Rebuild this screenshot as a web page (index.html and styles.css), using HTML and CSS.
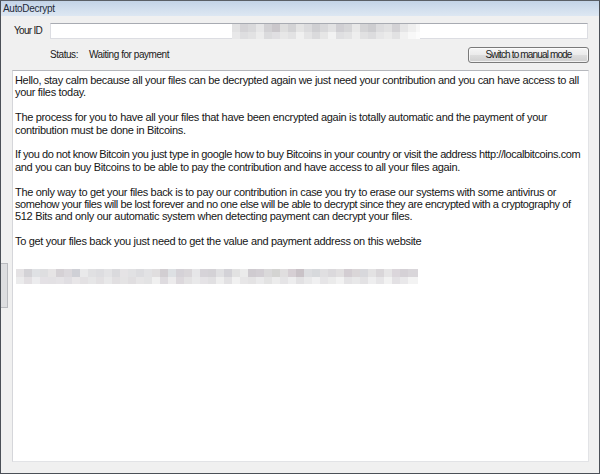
FILE: index.html
```html
<!DOCTYPE html>
<html>
<head>
<meta charset="utf-8">
<title>AutoDecrypt</title>
<link rel="stylesheet" href="styles.css">
</head>
<body>
<div class="window">
  <div class="titlebar">AutoDecrypt</div>
  <div class="row row-id">
    <span class="label id-label">Your ID</span>
    <div class="idbox">
      <svg class="blur blur-id" width="188" height="15" viewBox="0 0 188 15">
        <g>
          <rect x="0" y="0" width="8" height="8" fill="#e2e2e3"/>
          <rect x="8" y="0" width="8" height="8" fill="#d4d3d6"/>
          <rect x="16" y="0" width="8" height="8" fill="#d9d9db"/>
          <rect x="24" y="0" width="8" height="8" fill="#e6e6e7"/>
          <rect x="32" y="0" width="8" height="8" fill="#d2d1d4"/>
          <rect x="40" y="0" width="8" height="8" fill="#cac7cb"/>
          <rect x="48" y="0" width="8" height="8" fill="#dedede"/>
          <rect x="56" y="0" width="8" height="8" fill="#d3d3d5"/>
          <rect x="64" y="0" width="8" height="8" fill="#e4e4e4"/>
          <rect x="72" y="0" width="8" height="8" fill="#dbdbdd"/>
          <rect x="80" y="0" width="8" height="8" fill="#cfcfd2"/>
          <rect x="88" y="0" width="8" height="8" fill="#d8d8da"/>
          <rect x="96" y="0" width="8" height="8" fill="#e2e2e3"/>
          <rect x="104" y="0" width="8" height="8" fill="#d0cfd3"/>
          <rect x="112" y="0" width="8" height="8" fill="#d6d6d8"/>
          <rect x="120" y="0" width="8" height="8" fill="#e8e8e8"/>
          <rect x="128" y="0" width="8" height="8" fill="#d4d4d6"/>
          <rect x="136" y="0" width="8" height="8" fill="#cdcdd0"/>
          <rect x="144" y="0" width="8" height="8" fill="#dcdcde"/>
          <rect x="152" y="0" width="8" height="8" fill="#e1e1e2"/>
          <rect x="160" y="0" width="8" height="8" fill="#d3d2d5"/>
          <rect x="168" y="0" width="8" height="8" fill="#e5e5e6"/>
          <rect x="176" y="0" width="8" height="8" fill="#efefef"/>
          <rect x="184" y="0" width="4" height="8" fill="#f7f7f7"/>
        </g>
        <g>
          <rect x="0" y="8" width="8" height="7" fill="#e8e8e9"/>
          <rect x="8" y="8" width="8" height="7" fill="#dedee0"/>
          <rect x="16" y="8" width="8" height="7" fill="#e2e2e3"/>
          <rect x="24" y="8" width="8" height="7" fill="#ececec"/>
          <rect x="32" y="8" width="8" height="7" fill="#dbdbdd"/>
          <rect x="40" y="8" width="8" height="7" fill="#e0dfe2"/>
          <rect x="48" y="8" width="8" height="7" fill="#e7e7e7"/>
          <rect x="56" y="8" width="8" height="7" fill="#e2e2e3"/>
          <rect x="64" y="8" width="8" height="7" fill="#f0f0f0"/>
          <rect x="72" y="8" width="8" height="7" fill="#e4e4e5"/>
          <rect x="80" y="8" width="8" height="7" fill="#dadadc"/>
          <rect x="88" y="8" width="8" height="7" fill="#e6e6e6"/>
          <rect x="96" y="8" width="8" height="7" fill="#f2f2f2"/>
          <rect x="104" y="8" width="8" height="7" fill="#dfdfe1"/>
          <rect x="112" y="8" width="8" height="7" fill="#e3e3e4"/>
          <rect x="120" y="8" width="8" height="7" fill="#eeeeee"/>
          <rect x="128" y="8" width="8" height="7" fill="#e1e1e2"/>
          <rect x="136" y="8" width="8" height="7" fill="#dcdcde"/>
          <rect x="144" y="8" width="8" height="7" fill="#e6e6e7"/>
          <rect x="152" y="8" width="8" height="7" fill="#ebebeb"/>
          <rect x="160" y="8" width="8" height="7" fill="#e2e2e3"/>
          <rect x="168" y="8" width="8" height="7" fill="#f1f1f1"/>
          <rect x="176" y="8" width="8" height="7" fill="#f8f8f8"/>
          <rect x="184" y="8" width="4" height="7" fill="#fcfcfc"/>
        </g>
      </svg>
    </div>
  </div>
  <div class="row row-status">
    <span class="label status-label">Status:</span>
    <span class="label status-value">Waiting for payment</span>
    <button class="btn">Switch to manual mode</button>
  </div>
  <div class="memo">
    <p>Hello, stay calm because all your files can be decrypted again we just need your contribution and you can have access to all<br>your files today.</p>
    <p>The process for you to have all your files that have been encrypted again is totally automatic and the payment of your<br>contribution must be done in Bitcoins.</p>
    <p><span class="tight">If you do not know Bitcoin you just type in google how to buy Bitcoins in your country or visit the address http://localbitcoins.com</span><br>and you can buy Bitcoins to be able to pay the contribution and have access to all your files again.</p>
    <p>The only way to get your files back is to pay our contribution in case you try to erase our systems with some antivirus or<br><span class="tight">somehow your files will be lost forever and no one else will be able to decrypt since they are encrypted with a cryptography of</span><br>512 Bits and only our automatic system when detecting payment can decrypt your files.</p>
    <p>To get your files back you just need to get the value and payment address on this website</p>
    <svg class="blur blur-memo" width="402" height="15" viewBox="0 0 402 15">
      <g>
        <rect x="0" y="0" width="8" height="8" fill="#e4e2e4"/>
        <rect x="8" y="0" width="8" height="8" fill="#d3d2d6"/>
        <rect x="16" y="0" width="8" height="8" fill="#dfe1e4"/>
        <rect x="24" y="0" width="8" height="8" fill="#dedee0"/>
        <rect x="32" y="0" width="8" height="8" fill="#e6e4e5"/>
        <rect x="40" y="0" width="8" height="8" fill="#d5d1d5"/>
        <rect x="48" y="0" width="8" height="8" fill="#dbd8dc"/>
        <rect x="56" y="0" width="8" height="8" fill="#cfd0d6"/>
        <rect x="64" y="0" width="8" height="8" fill="#e9e9ea"/>
        <rect x="72" y="0" width="8" height="8" fill="#e0e0e2"/>
        <rect x="80" y="0" width="8" height="8" fill="#dddde0"/>
        <rect x="88" y="0" width="8" height="8" fill="#e3e3e5"/>
        <rect x="96" y="0" width="8" height="8" fill="#dadadd"/>
        <rect x="104" y="0" width="8" height="8" fill="#e5e3e5"/>
        <rect x="112" y="0" width="8" height="8" fill="#e1e1e3"/>
        <rect x="120" y="0" width="8" height="8" fill="#dcdcdf"/>
        <rect x="128" y="0" width="8" height="8" fill="#e2e2e4"/>
        <rect x="136" y="0" width="8" height="8" fill="#e0dedf"/>
        <rect x="144" y="0" width="8" height="8" fill="#d2ced2"/>
        <rect x="152" y="0" width="8" height="8" fill="#dde0e3"/>
        <rect x="160" y="0" width="8" height="8" fill="#d5d2d7"/>
        <rect x="168" y="0" width="8" height="8" fill="#d9d6d9"/>
        <rect x="176" y="0" width="8" height="8" fill="#e6e6e8"/>
        <rect x="184" y="0" width="8" height="8" fill="#d6d3d8"/>
        <rect x="192" y="0" width="8" height="8" fill="#d4d2d6"/>
        <rect x="200" y="0" width="8" height="8" fill="#e0e0e2"/>
        <rect x="208" y="0" width="8" height="8" fill="#d3d2d7"/>
        <rect x="216" y="0" width="8" height="8" fill="#e2e2e2"/>
        <rect x="224" y="0" width="8" height="8" fill="#ebebeb"/>
        <rect x="232" y="0" width="8" height="8" fill="#cfcbd0"/>
        <rect x="240" y="0" width="8" height="8" fill="#d2ced3"/>
        <rect x="248" y="0" width="8" height="8" fill="#dad9da"/>
        <rect x="256" y="0" width="8" height="8" fill="#d4d4d2"/>
        <rect x="264" y="0" width="8" height="8" fill="#e0dedf"/>
        <rect x="272" y="0" width="8" height="8" fill="#d6cfd4"/>
        <rect x="280" y="0" width="8" height="8" fill="#c9c2c7"/>
        <rect x="288" y="0" width="8" height="8" fill="#dcdde0"/>
        <rect x="296" y="0" width="8" height="8" fill="#d7d9dc"/>
        <rect x="304" y="0" width="8" height="8" fill="#e0dfe1"/>
        <rect x="312" y="0" width="8" height="8" fill="#dbd9dc"/>
        <rect x="320" y="0" width="8" height="8" fill="#e1dfe0"/>
        <rect x="328" y="0" width="8" height="8" fill="#d3cdd2"/>
        <rect x="336" y="0" width="8" height="8" fill="#dad6d8"/>
        <rect x="344" y="0" width="8" height="8" fill="#d8d8dc"/>
        <rect x="352" y="0" width="8" height="8" fill="#e3e2e3"/>
        <rect x="360" y="0" width="8" height="8" fill="#d9d6d9"/>
        <rect x="368" y="0" width="8" height="8" fill="#e6e5e6"/>
        <rect x="376" y="0" width="8" height="8" fill="#dbd6db"/>
        <rect x="384" y="0" width="8" height="8" fill="#d5d1d6"/>
        <rect x="392" y="0" width="10" height="8" fill="#d9d6da"/>
      </g>
      <g>
        <rect x="0" y="8" width="8" height="7" fill="#ebebec"/>
        <rect x="8" y="8" width="8" height="7" fill="#e2dfe2"/>
        <rect x="16" y="8" width="8" height="7" fill="#ececee"/>
        <rect x="24" y="8" width="8" height="7" fill="#e4e1e5"/>
        <rect x="32" y="8" width="8" height="7" fill="#e3e1e4"/>
        <rect x="40" y="8" width="8" height="7" fill="#e5e3e6"/>
        <rect x="48" y="8" width="8" height="7" fill="#e0dee2"/>
        <rect x="56" y="8" width="8" height="7" fill="#e8e6e8"/>
        <rect x="64" y="8" width="8" height="7" fill="#e3e1e3"/>
        <rect x="72" y="8" width="8" height="7" fill="#e6e6e7"/>
        <rect x="80" y="8" width="8" height="7" fill="#e2e0e2"/>
        <rect x="88" y="8" width="8" height="7" fill="#e8e8e9"/>
        <rect x="96" y="8" width="8" height="7" fill="#e1dfe1"/>
        <rect x="104" y="8" width="8" height="7" fill="#e4e3e4"/>
        <rect x="112" y="8" width="8" height="7" fill="#e0dee0"/>
        <rect x="120" y="8" width="8" height="7" fill="#e6e5e6"/>
        <rect x="128" y="8" width="8" height="7" fill="#e3e3e4"/>
        <rect x="136" y="8" width="8" height="7" fill="#f0f0f0"/>
        <rect x="144" y="8" width="8" height="7" fill="#dedbdf"/>
        <rect x="152" y="8" width="8" height="7" fill="#ecebec"/>
        <rect x="160" y="8" width="8" height="7" fill="#dcd8dc"/>
        <rect x="168" y="8" width="8" height="7" fill="#e3e2e3"/>
        <rect x="176" y="8" width="8" height="7" fill="#e9e9ea"/>
        <rect x="184" y="8" width="8" height="7" fill="#e5e3e6"/>
        <rect x="192" y="8" width="8" height="7" fill="#e1e0e2"/>
        <rect x="200" y="8" width="8" height="7" fill="#eeeeee"/>
        <rect x="208" y="8" width="8" height="7" fill="#e2e1e3"/>
        <rect x="216" y="8" width="8" height="7" fill="#f1f1f1"/>
        <rect x="224" y="8" width="8" height="7" fill="#e7e6e7"/>
        <rect x="232" y="8" width="8" height="7" fill="#e4e3e4"/>
        <rect x="240" y="8" width="8" height="7" fill="#eaeaeb"/>
        <rect x="248" y="8" width="8" height="7" fill="#e3e3e3"/>
        <rect x="256" y="8" width="8" height="7" fill="#ececec"/>
        <rect x="264" y="8" width="8" height="7" fill="#e5e4e6"/>
        <rect x="272" y="8" width="8" height="7" fill="#ededee"/>
        <rect x="280" y="8" width="8" height="7" fill="#e2e1e3"/>
        <rect x="288" y="8" width="8" height="7" fill="#e9e9ea"/>
        <rect x="296" y="8" width="8" height="7" fill="#f0f0f1"/>
        <rect x="304" y="8" width="8" height="7" fill="#e6e5e7"/>
        <rect x="312" y="8" width="8" height="7" fill="#ebebeb"/>
        <rect x="320" y="8" width="8" height="7" fill="#f2f2f2"/>
        <rect x="328" y="8" width="8" height="7" fill="#e4e3e5"/>
        <rect x="336" y="8" width="8" height="7" fill="#e8e8e9"/>
        <rect x="344" y="8" width="8" height="7" fill="#e3e2e4"/>
        <rect x="352" y="8" width="8" height="7" fill="#eeeeef"/>
        <rect x="360" y="8" width="8" height="7" fill="#e6e5e7"/>
        <rect x="368" y="8" width="8" height="7" fill="#f2f2f2"/>
        <rect x="376" y="8" width="8" height="7" fill="#e3e1e4"/>
        <rect x="384" y="8" width="8" height="7" fill="#e9e8ea"/>
        <rect x="392" y="8" width="10" height="7" fill="#f3f3f3"/>
      </g>
    </svg>
  </div>
  <div class="edge-artifact"></div>
</div>
</body>
</html>
```

FILE: styles.css
```css
* {
  box-sizing: border-box;
}

html, body {
  margin: 0;
  padding: 0;
  background: #f0f0f0;
}

body {
  font-family: "Liberation Sans", Arial, sans-serif;
  color: #1a1a1a;
}

.window {
  position: relative;
  width: 600px;
  height: 474px;
  border: 1px solid #4b5057;
  border-top-color: #5a5f66;
  background: #f0f0f0;
  display: flex;
  flex-direction: column;
  overflow: hidden;
}

.titlebar {
  height: 15px;
  flex: none;
  padding-left: 2px;
  background: linear-gradient(to bottom, #c3d3e7 0%, #d2dfee 55%, #dde7f2 100%);
  font-size: 10px;
  line-height: 15px;
  letter-spacing: -0.3px;
  color: #1f2b3a;
}

.row {
  display: flex;
  align-items: center;
  flex: none;
  height: 16px;
}

.row-id {
  margin-top: 7px;
  padding-left: 13px;
}

.label {
  font-size: 10px;
  letter-spacing: -0.45px;
  line-height: 16px;
  white-space: nowrap;
}

.id-label {
  width: 36px;
  letter-spacing: -0.7px;
}

.idbox {
  width: 538px;
  height: 16px;
  background: #fff;
  border: 1px solid #dcdde2;
  border-top-color: #a8abb2;
  padding-left: 181px;
}

.blur {
  display: block;
}

.row-status {
  margin-top: 8px;
  padding-left: 49px;
}

.status-label {
  width: 39px;
}

.btn {
  margin-left: auto;
  margin-right: 10px;
  width: 121px;
  height: 16px;
  padding: 0;
  border: 1px solid #7a7a7a;
  border-radius: 3px;
  background: linear-gradient(to bottom, #f6f6f6 0%, #ebebeb 48%, #dddddd 52%, #cfcfcf 100%);
  box-shadow: inset 0 0 0 1px rgba(255, 255, 255, 0.7);
  font-family: "Liberation Sans", Arial, sans-serif;
  font-size: 10px;
  letter-spacing: -0.85px;
  line-height: 14px;
  color: #1a1a1a;
  text-align: center;
}

.memo {
  flex: none;
  margin-top: 7px;
  margin-left: 11px;
  width: 577px;
  height: 392px;
  background: #fff;
  border: 1px solid #e2e3e6;
  border-top-color: #b5b7bc;
  border-left-color: #d5d6da;
  padding: 3px 0 0 2px;
  font-size: 11px;
  line-height: 12.4px;
  letter-spacing: -0.32px;
  color: #161616;
  overflow: hidden;
}

.memo p {
  margin: 0 0 12.4px 0;
  white-space: nowrap;
}

.memo .tight {
  letter-spacing: -0.42px;
}

.blur-memo {
  margin-top: 21px;
  margin-left: 1px;
}

.edge-artifact {
  position: absolute;
  left: -1px;
  top: 262px;
  width: 8px;
  height: 45px;
  background: #dddee0;
  border: 1px solid #b9bbbf;
  border-left: none;
}
```
